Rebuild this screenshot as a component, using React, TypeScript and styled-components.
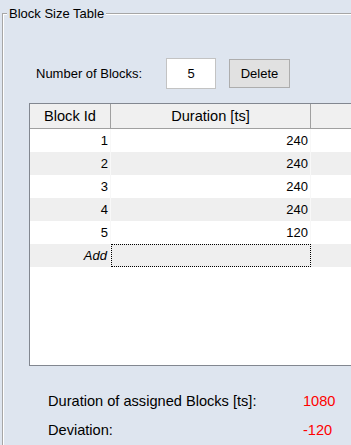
import styled, { createGlobalStyle } from "styled-components";

const GlobalStyle = createGlobalStyle`
  html, body {
    margin: 0;
    padding: 0;
    background: #dee5ef;
  }
  body {
    font-family: "Liberation Sans", Arial, sans-serif;
    color: #000;
  }
`;

const Screen = styled.div`
  width: 351px;
  height: 445px;
  overflow: hidden;
  background: #dee5ef;
  padding-top: 6px;
  box-sizing: border-box;
`;

const GroupBox = styled.fieldset`
  margin: 0 0 0 2px;
  padding: 0;
  width: 400px;
  height: 470px;
  box-sizing: border-box;
  border: 1px solid #a6a6a6;
  box-shadow: inset 1px 1px 0 #ffffff;
  min-width: 0;
`;

const GroupTitle = styled.legend`
  margin-left: 4px;
  padding: 0 2px;
  font-size: 13px;
  line-height: 15px;
  background: #dee5ef;
`;

const Content = styled.div`
  padding-left: 26px;
`;

const ControlRow = styled.div`
  display: flex;
  align-items: center;
  margin-top: 37px;
  height: 31px;
`;

const FieldLabel = styled.span`
  margin-left: 7px;
  width: 130px;
  font-size: 13px;
`;

const NumberBox = styled.input.attrs({ type: "text" })`
  width: 50px;
  height: 31px;
  box-sizing: border-box;
  border: 1px solid #c3c3c3;
  background: #fff;
  text-align: center;
  font-family: inherit;
  font-size: 13px;
  padding: 0;
  outline: none;
`;

const Button = styled.button`
  margin-left: 13px;
  width: 61px;
  height: 29px;
  box-sizing: border-box;
  border: 1px solid #adadad;
  background: #e1e1e1;
  font-family: inherit;
  font-size: 13px;
  padding: 0;
  color: #000;
`;

const Grid = styled.div`
  margin-top: 14px;
  width: 340px;
  height: 263px;
  box-sizing: border-box;
  border: 1px solid #828790;
  background: #fff;
  overflow: hidden;
`;

const Row = styled.div<{ $shade?: boolean }>`
  display: grid;
  grid-template-columns: 81px 200px 1fr;
  height: 23px;
  background: ${(p) => (p.$shade ? "#efefef" : "#ffffff")};
`;

const HeaderRow = styled.div`
  display: grid;
  grid-template-columns: 81px 200px 1fr;
  height: 25px;
  box-sizing: border-box;
  background: #f0f0f0;
  border-bottom: 1px solid #a0a0a0;
`;

const HeaderCell = styled.div`
  border-right: 1px solid #a0a0a0;
  font-size: 14.6px;
  line-height: 24px;
  text-align: center;
`;

const Cell = styled.div<{ $italic?: boolean; $focused?: boolean }>`
  box-sizing: border-box;
  border-right: 1px solid #f8f8f8;
  font-size: 13px;
  line-height: 23px;
  text-align: right;
  padding-right: ${(p) => (p.$italic ? "3px" : "2px")};
  font-style: ${(p) => (p.$italic ? "italic" : "normal")};
  outline: ${(p) => (p.$focused ? "1px dotted #000" : "none")};
  outline-offset: -1px;
`;

const Summary = styled.div`
  margin-top: 27px;
  padding-left: 19px;
  display: grid;
  grid-template-columns: 255px auto;
  row-gap: 12px;
  font-size: 14.6px;
  line-height: 17px;
`;

const Value = styled.span`
  color: #ff0000;
`;

const blocks = [
  { id: 1, duration: 240 },
  { id: 2, duration: 240 },
  { id: 3, duration: 240 },
  { id: 4, duration: 240 },
  { id: 5, duration: 120 },
];

const App = () => {
  return (
    <Screen>
      <GlobalStyle />
      <GroupBox>
        <GroupTitle>Block Size Table</GroupTitle>
        <Content>
          <ControlRow>
            <FieldLabel>Number of Blocks:</FieldLabel>
            <NumberBox defaultValue="5" />
            <Button>Delete</Button>
          </ControlRow>

          <Grid>
            <HeaderRow>
              <HeaderCell>Block Id</HeaderCell>
              <HeaderCell>Duration [ts]</HeaderCell>
              <HeaderCell />
            </HeaderRow>
            {blocks.map((b, i) => (
              <Row key={b.id} $shade={i % 2 === 1}>
                <Cell>{b.id}</Cell>
                <Cell>{b.duration}</Cell>
                <Cell />
              </Row>
            ))}
            <Row $shade>
              <Cell $italic>Add</Cell>
              <Cell $focused />
              <Cell />
            </Row>
          </Grid>

          <Summary>
            <span>Duration of assigned Blocks [ts]:</span>
            <Value>1080</Value>
            <span>Deviation:</span>
            <Value>-120</Value>
          </Summary>
        </Content>
      </GroupBox>
    </Screen>
  );
};

export default App;
